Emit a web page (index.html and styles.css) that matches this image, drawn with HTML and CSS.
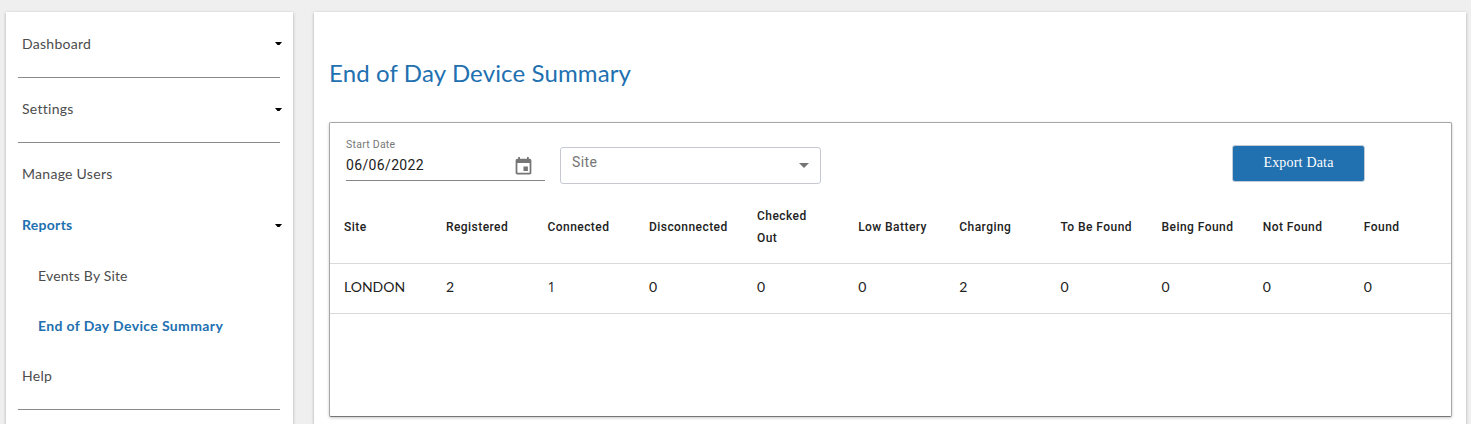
FILE: index.html
```
<!DOCTYPE html>
<html lang="en">
<head>
<meta charset="utf-8">
<title>End of Day Device Summary</title>
<link rel="stylesheet" href="styles.css">
</head>
<body>
<div class="layout">
  <nav class="sidebar">
    <a class="nav-item"><span>Dashboard</span><svg class="caret" viewBox="0 0 7 4"><path d="M0 0h7L4.500 3h-2z"/></svg></a>
    <hr class="divider">
    <a class="nav-item"><span>Settings</span><svg class="caret" viewBox="0 0 7 4"><path d="M0 0h7L4.500 3h-2z"/></svg></a>
    <hr class="divider">
    <a class="nav-item users"><span>Manage Users</span></a>
    <a class="nav-item active"><span>Reports</span><svg class="caret" viewBox="0 0 7 4"><path d="M0 0h7L4.500 3h-2z"/></svg></a>
    <a class="nav-item sub"><span class="events">Events By Site</span></a>
    <a class="nav-item sub active current"><span>End of Day Device Summary</span></a>
    <a class="nav-item"><span>Help</span></a>
    <hr class="divider">
  </nav>
  <main class="content">
    <h1 class="title"><span>End of Day Device Summary</span></h1>
    <section class="panel">
      <div class="filters">
        <div class="date-field">
          <label class="date-label">Start Date</label>
          <div class="date-row">
            <span class="date-value">06/06/2022</span>
            <svg class="calendar" viewBox="0 0 24 24"><path d="M17 12h-5v5h5v-5zM16 1v2H8V1H6v2H5c-1.110 0-1.990.9-1.990 2L3 19c0 1.100.890 2 2 2h14c1.100 0 2-.9 2-2V5c0-1.100-.9-2-2-2h-1V1h-2zm3 18H5V8h14v11z"/></svg>
          </div>
        </div>
        <div class="select"><span>Site</span><svg class="select-arrow" viewBox="0 0 10 5"><path d="M0 0h10L5 5z"/></svg></div>
        <button class="export"><span>Export Data</span></button>
      </div>
      <table class="summary">
        <colgroup><col class="c-first"><col class="c-a"><col class="c-a"><col class="c-wide"><col><col><col><col><col><col><col></colgroup>
        <thead>
          <tr><th>Site</th><th>Registered</th><th>Connected</th><th>Disconnected</th><th>Checked<br>Out</th><th>Low Battery</th><th>Charging</th><th>To Be Found</th><th>Being Found</th><th>Not Found</th><th>Found</th></tr>
        </thead>
        <tbody>
          <tr><td class="site">LONDON</td><td>2</td><td class="one">1</td><td>0</td><td>0</td><td>0</td><td>2</td><td>0</td><td>0</td><td>0</td><td>0</td></tr>
        </tbody>
      </table>
    </section>
  </main>
</div>
</body>
</html>
```
FILE: styles.css
```
* { box-sizing: border-box; }
body {
  margin: 0;
  height: 424px;
  overflow: hidden;
  background: #efefef;
  font-family: Lato, "Open Sans", sans-serif;
}
.layout {
  display: flex;
  gap: 21px;
  height: 424px;
  padding: 12px 5px 0 6px;
}
.sidebar, .content {
  background: #fff;
  box-shadow: 0 1px 3px rgba(0, 0, 0, .28);
}
.sidebar {
  width: 287px;
  flex: none;
  padding: 6.4px 13px 0 12px;
}
.nav-item {
  display: flex;
  align-items: center;
  justify-content: space-between;
  height: 50.3px;
  padding: 0 0 1px 4px;
  margin-right: -2px;
  font-size: 14px;
  letter-spacing: .28px;
  color: #4c4c4c;
}
.users { padding-bottom: 3px; }
.sub { padding-left: 20px; }
.events { letter-spacing: .18px; }
.active { color: #2170b0; font-weight: 700; }
.current { padding-bottom: 0; letter-spacing: .37px; }
.caret { width: 7px; height: 4px; margin-top: 2px; fill: #000; }
.divider {
  height: 1px;
  border: 0;
  margin: 8px 0 6.4px;
  background: #8a8a8a;
}
.content { flex: 1; padding: 0 14px 0 15px; }
.title {
  margin: 0;
  height: 110px;
  padding-top: 46px;
  font-size: 24px;
  line-height: 30px;
  font-weight: 400;
  letter-spacing: .13px;
  color: #2170b0;
}
.panel {
  height: 295px;
  border: 1px solid #a6a6a6;
  border-bottom-color: #777;
  border-radius: 2px;
  box-shadow: 0 1px 3px rgba(0, 0, 0, .22);
  font-family: Roboto, sans-serif;
}
.filters {
  display: flex;
  align-items: flex-start;
  height: 67px;
  padding: 0 86px 0 16px;
}
.date-field {
  width: 199px;
  height: 58px;
  padding-top: 15px;
  border-bottom: 1px solid #858585;
}
.date-label {
  display: block;
  font-size: 10.5px;
  line-height: 13px;
  letter-spacing: .25px;
  color: #777;
}
.date-row {
  display: flex;
  align-items: center;
  justify-content: space-between;
  height: 29px;
  padding: 1px 11px 0 0;
}
.date-value {
  padding-bottom: 2px;
  font-size: 14px;
  line-height: 26px;
  letter-spacing: .35px;
  color: #222;
}
.calendar { width: 21px; height: 21px; margin-top: 1px; fill: #757575; }
.select {
  display: flex;
  justify-content: space-between;
  width: 261px;
  height: 37px;
  margin: 24px 0 0 15px;
  padding: 0 11px 0 11px;
  border: 1px solid #c6c9d3;
  border-radius: 3px;
  font-size: 14px;
  line-height: 29px;
  letter-spacing: .4px;
  color: #757575;
}
.select-arrow { width: 10px; height: 5px; margin-top: 15px; fill: #757575; }
.export {
  width: 133px;
  height: 37px;
  margin: 22px 0 0 auto;
  padding: 0 0 2px;
  border: 1px solid #c3cbd8;
  border-radius: 3px;
  background: #2170b0;
  color: #fff;
  font: 14px "Liberation Serif", serif;
  letter-spacing: .2px;
}
.summary {
  width: 100%;
  table-layout: fixed;
  border-collapse: collapse;
}
.c-first { width: 102px; }
.c-a { width: 101.5px; }
.c-wide { width: 108px; }
th, td { text-align: left; padding: 0 12px 0 14px; border-bottom: 1px solid #d9d9d9; color: #222; }
th {
  height: 73px;
  padding-top: 1px;
  font-size: 12px;
  font-weight: 500;
  line-height: 22px;
  letter-spacing: .44px;
  white-space: nowrap;
}
td { height: 50px; padding-bottom: 3px; font: 14px/17px Lato, sans-serif; }
.one { font-family: "Open Sans", sans-serif; }
```
